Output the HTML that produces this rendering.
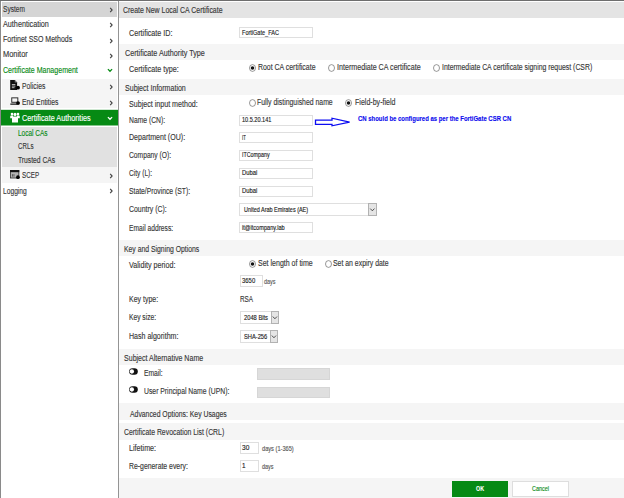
<!DOCTYPE html>
<html lang="en"><head><meta charset="utf-8"><title>Create New Local CA Certificate</title>
<style>
html,body{margin:0;padding:0;background:#fff}
body{width:624px;height:498px;overflow:hidden;position:relative;font-family:'Liberation Sans',sans-serif;}
#app{position:absolute;left:0;top:0;width:624px;height:498px;overflow:hidden;background:#fff}
#app:before{content:"";position:absolute;left:0;top:0;width:624px;height:1px;background:#6e6e6e;z-index:5}
#app:after{content:"";position:absolute;left:0;top:1px;width:1px;height:497px;background:#8a8a8a;z-index:5}
nav{position:absolute;left:0;top:0;width:118px;height:498px}
nav:after{content:"";position:absolute;left:118px;top:0;width:1px;height:498px;background:#949494}
nav ul{list-style:none;margin:0;padding:0}
nav li{position:absolute;margin:0;padding:0}
main{position:absolute;left:119px;top:0;width:505px;height:498px}
.t{position:absolute;white-space:nowrap;line-height:12px;height:12px;margin:0;padding:0;font-weight:400;transform-origin:0 50%;font-family:'Liberation Sans',sans-serif;display:block;-webkit-text-stroke:0.13px currentColor}
.a{position:absolute;display:block}
.bar{position:absolute;left:0;right:0}
.inp{position:absolute;box-sizing:border-box;border:1px solid #dfdfdf;background:#fff}
.inp.dis{background:#dfdfdf;border-color:#d6d6d6}
.sel{position:absolute;box-sizing:border-box;border:1px solid #dfdfdf;background:#fff}
.sel .btn{position:absolute;top:-1px;bottom:-1px;box-sizing:border-box;border:1px solid #b2b2b2;background:#e5e5e5;overflow:hidden}
.sel .btn svg{position:absolute;left:-1px;top:-1px}
.foot{position:absolute;left:0;right:0;background:#f5f5f5}
button{position:absolute;box-sizing:border-box;margin:0;padding:0;border:0;font-family:'Liberation Sans',sans-serif;border-radius:0}
button.ok{background:#068a14}
button.cancel{background:#fff;border:1px solid #dedede}
</style></head>
<body><div id="app">
<nav><ul><li style="top:2.0px;height:14.70px;left:2px;width:115px;background:#d5d5d5;"><span class="t" style="left:1.05px;top:1.20px;font-size:8.5px;color:#363636;transform:scaleX(0.7727);">System</span><svg class="a" style="left:106.5px;top:4.70px" width="5" height="6" viewBox="0 0 5 6"><path d="M1.2 0.9 L3.1 3 L1.2 5.1" fill="none" stroke="#444" stroke-width="1.15"/></svg></li>
<li style="top:16.5px;height:15.50px;left:2px;width:115px;"><span class="t" style="left:1.05px;top:1.20px;font-size:8.5px;color:#363636;transform:scaleX(0.8520);">Authentication</span><svg class="a" style="left:106.5px;top:5.30px" width="5" height="6" viewBox="0 0 5 6"><path d="M1.2 0.9 L3.1 3 L1.2 5.1" fill="none" stroke="#444" stroke-width="1.15"/></svg></li>
<li style="top:32.0px;height:15.50px;left:2px;width:115px;"><span class="t" style="left:1.05px;top:1.30px;font-size:8.5px;color:#363636;transform:scaleX(0.8229);">Fortinet SSO Methods</span><svg class="a" style="left:106.5px;top:5.60px" width="5" height="6" viewBox="0 0 5 6"><path d="M1.2 0.9 L3.1 3 L1.2 5.1" fill="none" stroke="#444" stroke-width="1.15"/></svg></li>
<li style="top:47.5px;height:15.50px;left:2px;width:115px;"><span class="t" style="left:1.05px;top:0.80px;font-size:8.5px;color:#363636;transform:scaleX(0.8750);">Monitor</span><svg class="a" style="left:106.5px;top:5.40px" width="5" height="6" viewBox="0 0 5 6"><path d="M1.2 0.9 L3.1 3 L1.2 5.1" fill="none" stroke="#444" stroke-width="1.15"/></svg></li>
<li style="top:63.0px;height:15.50px;left:2px;width:115px;"><span class="t" style="left:1.05px;top:0.90px;font-size:8.5px;color:#068a14;transform:scaleX(0.8288);">Certificate Management</span><svg class="a" style="left:105.3px;top:5.40px" width="6" height="5" viewBox="0 0 6 5"><path d="M0.9 1.1 L3 3.3 L5.1 1.1" fill="none" stroke="#068a14" stroke-width="1.25"/></svg></li>
<li style="top:78.5px;height:15.50px;left:2px;width:115px;background:#f5f5f5;"><svg class="a" style="left:8.1px;top:1.80px" width="10.3" height="10.5" preserveAspectRatio="none" viewBox="0 0 10 10"><path d="M0.2 0 H4.6 L6.9 2.3 V9.6 H0.2 Z" fill="#111"/><path d="M4.6 0 V2.3 H6.9 Z" fill="#777"/><path d="M1.8 4.3H5.2M1.8 5.8H5.2M1.8 7.3H4.4" stroke="#c8c8c8" stroke-width="0.85"/><circle cx="7.8" cy="7.3" r="1.85" fill="#000"/></svg><span class="t" style="left:19.85px;top:1.20px;font-size:8.5px;color:#363636;transform:scaleX(0.7953);">Policies</span><svg class="a" style="left:106.5px;top:5.10px" width="5" height="6" viewBox="0 0 5 6"><path d="M1.2 0.9 L3.1 3 L1.2 5.1" fill="none" stroke="#444" stroke-width="1.15"/></svg></li>
<li style="top:94.0px;height:14.00px;left:2px;width:115px;background:#f5f5f5;"><svg class="a" style="left:8.1px;top:1.90px" width="10.3" height="10.3" preserveAspectRatio="none" viewBox="0 0 10 10"><rect x="1.7" y="1.8" width="5.9" height="4.3" fill="none" stroke="#2a2a2a" stroke-width="0.95"/><path d="M0.3 7.9H7" stroke="#222" stroke-width="1.3"/><circle cx="7.8" cy="6.9" r="1.85" fill="#000"/></svg><span class="t" style="left:20.15px;top:2.00px;font-size:8.5px;color:#363636;transform:scaleX(0.8044);">End Entities</span><svg class="a" style="left:106.5px;top:5.70px" width="5" height="6" viewBox="0 0 5 6"><path d="M1.2 0.9 L3.1 3 L1.2 5.1" fill="none" stroke="#444" stroke-width="1.15"/></svg></li>
<li style="top:109.0px;height:17.00px;left:1px;width:117px;background:linear-gradient(to bottom,#cfe8d2 0,#cfe8d2 1px,#068a14 1px,#068a14 16px,#84c58b 16px,#84c58b 17px);"><svg class="a" style="left:9.1px;top:3.00px" width="10" height="10.6" preserveAspectRatio="none" viewBox="0 0 10 10"><g fill="#fff"><circle cx="2" cy="1.9" r="1.3"/><circle cx="8" cy="1.9" r="1.3"/><circle cx="5" cy="2.3" r="1.5"/><path d="M0.2 6V4.4Q0.2 3.4 1.2 3.4H3V6Z"/><path d="M9.8 6V4.4Q9.8 3.4 8.8 3.4H7V6Z"/><path d="M2 9.8V5.6Q2 4.2 3.4 4.2H6.6Q8 4.2 8 5.6V9.8Z"/></g></svg><span class="t" style="left:20.65px;top:3.20px;font-size:8.5px;color:#fff;transform:scaleX(0.8552);">Certificate Authorities</span><svg class="a" style="left:106.3px;top:6.70px" width="6" height="5" viewBox="0 0 6 5"><path d="M0.9 1.1 L3 3.3 L5.1 1.1" fill="none" stroke="#fff" stroke-width="1.25"/></svg></li>
<li style="top:127.0px;height:12.80px;left:2px;width:115px;background:#e1e1e1;"><span class="t" style="left:16.15px;top:-0.50px;font-size:8.5px;color:#068a14;transform:scaleX(0.7613);">Local CAs</span></li>
<li style="top:139.8px;height:13.60px;left:2px;width:115px;background:#e1e1e1;"><span class="t" style="left:16.15px;top:0.10px;font-size:8.5px;color:#363636;transform:scaleX(0.7289);">CRLs</span></li>
<li style="top:153.4px;height:13.60px;left:2px;width:115px;background:#e1e1e1;"><span class="t" style="left:16.15px;top:0.30px;font-size:8.5px;color:#363636;transform:scaleX(0.7928);">Trusted CAs</span></li>
<li style="top:167.0px;height:15.70px;left:2px;width:115px;background:#f5f5f5;"><svg class="a" style="left:8.1px;top:2.70px" width="10.2" height="10.4" preserveAspectRatio="none" viewBox="0 0 10 10"><rect x="0.5" y="0.5" width="8.2" height="7.2" fill="#b4b4b4" stroke="#2a2a2a" stroke-width="0.8"/><rect x="0.1" y="0.1" width="9" height="2" fill="#111"/><path d="M2.4 4V6.4M3.9 4V6.4" stroke="#444" stroke-width="0.8"/><circle cx="7.8" cy="6.9" r="1.8" fill="#000"/></svg><span class="t" style="left:19.85px;top:2.10px;font-size:8.5px;color:#363636;transform:scaleX(0.7385);">SCEP</span><svg class="a" style="left:106.5px;top:6.00px" width="5" height="6" viewBox="0 0 5 6"><path d="M1.2 0.9 L3.1 3 L1.2 5.1" fill="none" stroke="#444" stroke-width="1.15"/></svg></li>
<li style="top:182.7px;height:15.30px;left:2px;width:115px;"><span class="t" style="left:1.05px;top:2.00px;font-size:8.5px;color:#363636;transform:scaleX(0.7864);">Logging</span><svg class="a" style="left:106.5px;top:5.70px" width="5" height="6" viewBox="0 0 5 6"><path d="M1.2 0.9 L3.1 3 L1.2 5.1" fill="none" stroke="#444" stroke-width="1.15"/></svg></li></ul></nav>
<main><div class="bar" style="top:2px;height:16.10px;background:#e4e4e4"><h1 class="t" style="left:4.15px;top:1.90px;font-size:8.5px;color:#363636;transform:scaleX(0.8163);">Create New Local CA Certificate</h1></div>
<label class="t" style="left:9.85px;top:26.70px;font-size:8.3px;color:#363636;transform:scaleX(0.8654);">Certificate ID:</label>
<div class="inp" style="left:120.30px;top:27.10px;width:73.40px;height:11.30px"><span class="t" style="left:1.65px;top:-1.55px;font-size:6.5px;color:#1a1a1a;transform:scaleX(0.8510);">FortiGate_FAC</span></div>
<div class="bar" style="top:44.3px;height:15.80px;background:#f5f5f5"><h2 class="t" style="left:5.65px;top:3.00px;font-size:8.3px;color:#363636;transform:scaleX(0.8665);">Certificate Authority Type</h2></div>
<label class="t" style="left:9.85px;top:62.90px;font-size:8.3px;color:#363636;transform:scaleX(0.8637);">Certificate type:</label>
<svg class="a" style="left:130.00px;top:63.90px" width="7" height="8" viewBox="0 0 7 8"><ellipse cx="3.5" cy="4" rx="3.0" ry="3.4" fill="#fff" stroke="#606060" stroke-width="0.65"/><circle cx="3.5" cy="4" r="1.75" fill="#111"/></svg><span class="t" style="left:139.05px;top:61.30px;font-size:8.3px;color:#363636;transform:scaleX(0.8367);">Root CA certificate</span><svg class="a" style="left:209.30px;top:63.90px" width="7" height="8" viewBox="0 0 7 8"><ellipse cx="3.5" cy="4" rx="3.0" ry="3.4" fill="#fff" stroke="#606060" stroke-width="0.65"/></svg><span class="t" style="left:218.05px;top:61.30px;font-size:8.3px;color:#363636;transform:scaleX(0.8591);">Intermediate CA certificate</span><svg class="a" style="left:314.20px;top:63.90px" width="7" height="8" viewBox="0 0 7 8"><ellipse cx="3.5" cy="4" rx="3.0" ry="3.4" fill="#fff" stroke="#606060" stroke-width="0.65"/></svg><span class="t" style="left:322.55px;top:61.30px;font-size:8.3px;color:#363636;transform:scaleX(0.8288);">Intermediate CA certificate signing request (CSR)</span><div class="bar" style="top:78.85px;height:16.25px;background:#f5f5f5"><h2 class="t" style="left:5.65px;top:2.85px;font-size:8.3px;color:#363636;transform:scaleX(0.8505);">Subject Information</h2></div>
<label class="t" style="left:9.85px;top:97.90px;font-size:8.3px;color:#363636;transform:scaleX(0.8572);">Subject input method:</label>
<svg class="a" style="left:130.00px;top:99.10px" width="7" height="8" viewBox="0 0 7 8"><ellipse cx="3.5" cy="4" rx="3.0" ry="3.4" fill="#fff" stroke="#606060" stroke-width="0.65"/></svg><span class="t" style="left:138.45px;top:96.20px;font-size:8.3px;color:#363636;transform:scaleX(0.8289);">Fully distinguished name</span><svg class="a" style="left:226.40px;top:99.10px" width="7" height="8" viewBox="0 0 7 8"><ellipse cx="3.5" cy="4" rx="3.0" ry="3.4" fill="#fff" stroke="#606060" stroke-width="0.65"/><circle cx="3.5" cy="4" r="1.75" fill="#111"/></svg><span class="t" style="left:235.65px;top:96.20px;font-size:8.3px;color:#363636;transform:scaleX(0.8526);">Field-by-field</span><label class="t" style="left:9.85px;top:113.60px;font-size:8.3px;color:#363636;transform:scaleX(0.8155);">Name (CN):</label>
<div class="inp" style="left:120.30px;top:114.60px;width:73.40px;height:11.30px"><span class="t" style="left:1.65px;top:-1.55px;font-size:6.5px;color:#1a1a1a;transform:scaleX(0.8531);">10.5.20.141</span></div>
<label class="t" style="left:9.85px;top:131.30px;font-size:8.3px;color:#363636;transform:scaleX(0.8508);">Department (OU):</label>
<div class="inp" style="left:120.30px;top:132.10px;width:73.40px;height:11.30px"><span class="t" style="left:1.65px;top:-1.55px;font-size:6.5px;color:#1a1a1a;transform:scaleX(0.6573);">IT</span></div>
<label class="t" style="left:9.85px;top:148.90px;font-size:8.3px;color:#363636;transform:scaleX(0.8079);">Company (O):</label>
<div class="inp" style="left:120.30px;top:149.70px;width:73.40px;height:11.30px"><span class="t" style="left:1.65px;top:-1.55px;font-size:6.5px;color:#1a1a1a;transform:scaleX(0.8212);">ITCompany</span></div>
<label class="t" style="left:9.85px;top:166.90px;font-size:8.3px;color:#363636;transform:scaleX(0.7953);">City (L):</label>
<div class="inp" style="left:120.30px;top:167.70px;width:73.40px;height:11.30px"><span class="t" style="left:1.65px;top:-1.55px;font-size:6.5px;color:#1a1a1a;transform:scaleX(0.9008);">Dubai</span></div>
<label class="t" style="left:9.85px;top:184.90px;font-size:8.3px;color:#363636;transform:scaleX(0.8179);">State/Province (ST):</label>
<div class="inp" style="left:120.30px;top:185.90px;width:73.40px;height:11.30px"><span class="t" style="left:1.65px;top:-1.55px;font-size:6.5px;color:#1a1a1a;transform:scaleX(0.9008);">Dubai</span></div>
<label class="t" style="left:9.85px;top:203.20px;font-size:8.3px;color:#363636;transform:scaleX(0.8365);">Country (C):</label>
<div class="sel" style="left:120.40px;top:203.20px;width:137.40px;height:12.60px"><span class="t" style="left:3.45px;top:-0.50px;font-size:6.5px;color:#1a1a1a;transform:scaleX(0.8408);">United Arab Emirates (AE)</span><span class="btn" style="left:127.70px;width:8.70px"><svg width="8.70" height="12.60"><path d="M2.25 5.60 L4.35 7.80 L6.45 5.60" fill="none" stroke="#3c3c3c" stroke-width="0.9"/></svg></span></div>
<label class="t" style="left:9.85px;top:221.60px;font-size:8.3px;color:#363636;transform:scaleX(0.8036);">Email address:</label>
<div class="inp" style="left:120.30px;top:222.10px;width:73.40px;height:11.30px"><span class="t" style="left:1.55px;top:-1.55px;font-size:6.5px;color:#1a1a1a;transform:scaleX(0.8629);">it@itcompany.lab</span></div>
<div class="bar" style="top:239.9px;height:16.00px;background:#f5f5f5"><h2 class="t" style="left:5.25px;top:3.10px;font-size:8.3px;color:#363636;transform:scaleX(0.8234);">Key and Signing Options</h2></div>
<label class="t" style="left:9.85px;top:259.10px;font-size:8.3px;color:#363636;transform:scaleX(0.8623);">Validity period:</label>
<svg class="a" style="left:130.00px;top:259.50px" width="7" height="8" viewBox="0 0 7 8"><ellipse cx="3.5" cy="4" rx="3.0" ry="3.4" fill="#fff" stroke="#606060" stroke-width="0.65"/><circle cx="3.5" cy="4" r="1.75" fill="#111"/></svg><span class="t" style="left:138.85px;top:256.50px;font-size:8.3px;color:#363636;transform:scaleX(0.8470);">Set length of time</span><svg class="a" style="left:205.80px;top:259.50px" width="7" height="8" viewBox="0 0 7 8"><ellipse cx="3.5" cy="4" rx="3.0" ry="3.4" fill="#fff" stroke="#606060" stroke-width="0.65"/></svg><span class="t" style="left:214.15px;top:256.50px;font-size:8.3px;color:#363636;transform:scaleX(0.8312);">Set an expiry date</span><div class="inp" style="left:120.60px;top:275.30px;width:23.20px;height:11.30px"><span class="t" style="left:1.05px;top:-1.55px;font-size:6.8px;color:#1a1a1a;transform:scaleX(0.8727);">3650</span></div>
<span class="t" style="left:145.45px;top:275.60px;font-size:7px;color:#555;transform:scaleX(0.7772);">days</span><label class="t" style="left:9.85px;top:292.90px;font-size:8.3px;color:#363636;transform:scaleX(0.8412);">Key type:</label>
<span class="t" style="left:120.55px;top:293.30px;font-size:8.3px;color:#363636;transform:scaleX(0.7678);">RSA</span><label class="t" style="left:9.85px;top:310.60px;font-size:8.3px;color:#363636;transform:scaleX(0.8048);">Key size:</label>
<div class="sel" style="left:121.00px;top:311.10px;width:38.80px;height:12.50px"><span class="t" style="left:2.75px;top:-0.55px;font-size:6.5px;color:#1a1a1a;transform:scaleX(0.8853);">2048 Bits</span><span class="btn" style="left:30.00px;width:7.80px"><svg width="7.80" height="12.50"><path d="M1.80 5.55 L3.90 7.75 L6.00 5.55" fill="none" stroke="#3c3c3c" stroke-width="0.9"/></svg></span></div>
<label class="t" style="left:9.85px;top:329.60px;font-size:8.3px;color:#363636;transform:scaleX(0.8501);">Hash algorithm:</label>
<div class="sel" style="left:121.00px;top:330.30px;width:38.20px;height:12.50px"><span class="t" style="left:2.75px;top:-0.55px;font-size:6.5px;color:#1a1a1a;transform:scaleX(0.8796);">SHA-256</span><span class="btn" style="left:29.30px;width:7.90px"><svg width="7.90" height="12.50"><path d="M1.85 5.55 L3.95 7.75 L6.05 5.55" fill="none" stroke="#3c3c3c" stroke-width="0.9"/></svg></span></div>
<div class="bar" style="top:348.9px;height:16.20px;background:#f5f5f5"><h2 class="t" style="left:5.25px;top:3.20px;font-size:8.3px;color:#363636;transform:scaleX(0.8500);">Subject Alternative Name</h2></div>
<svg class="a" style="left:9.80px;top:368.10px" width="9" height="7" viewBox="0 0 9 7"><rect x="0.2" y="0.2" width="8.6" height="6.6" rx="3.3" fill="#111"/><circle cx="2.9" cy="3.5" r="2.15" fill="#fff"/></svg><label class="t" style="left:25.15px;top:367.40px;font-size:8.3px;color:#363636;transform:scaleX(0.8108);">Email:</label>
<div class="inp dis" style="left:138.00px;top:368.40px;width:73.00px;height:11.30px"></div>
<svg class="a" style="left:9.80px;top:386.10px" width="9" height="7" viewBox="0 0 9 7"><rect x="0.2" y="0.2" width="8.6" height="6.6" rx="3.3" fill="#111"/><circle cx="2.9" cy="3.5" r="2.15" fill="#fff"/></svg><label class="t" style="left:25.15px;top:385.40px;font-size:8.3px;color:#363636;transform:scaleX(0.8223);">User Principal Name (UPN):</label>
<div class="inp dis" style="left:138.00px;top:386.60px;width:73.00px;height:11.30px"></div>
<div class="bar" style="top:403.2px;height:17.20px;background:#f5f5f5"><h2 class="t" style="left:11.15px;top:4.50px;font-size:8.3px;color:#363636;transform:scaleX(0.8254);">Advanced Options: Key Usages</h2></div>
<div class="bar" style="top:422.9px;height:16.80px;background:#f5f5f5"><h2 class="t" style="left:5.25px;top:2.90px;font-size:8.3px;color:#363636;transform:scaleX(0.8294);">Certificate Revocation List (CRL)</h2></div>
<label class="t" style="left:9.85px;top:441.90px;font-size:8.3px;color:#363636;transform:scaleX(0.8642);">Lifetime:</label>
<div class="inp" style="left:120.90px;top:442.40px;width:19.30px;height:11.70px"><span class="t" style="left:1.55px;top:-1.35px;font-size:6.5px;color:#1a1a1a;transform:scaleX(1.0091);">30</span></div>
<span class="t" style="left:142.55px;top:442.70px;font-size:6.8px;color:#555;transform:scaleX(0.8308);">days (1-365)</span><label class="t" style="left:9.85px;top:459.80px;font-size:8.3px;color:#363636;transform:scaleX(0.8278);">Re-generate every:</label>
<div class="inp" style="left:120.90px;top:460.40px;width:19.30px;height:11.30px"><span class="t" style="left:1.55px;top:-1.55px;font-size:6.5px;color:#1a1a1a;transform:scaleX(0.9655);">1</span></div>
<span class="t" style="left:142.55px;top:460.80px;font-size:6.8px;color:#555;transform:scaleX(0.7939);">days</span><svg class="a" style="left:195px;top:116px" width="38" height="12" viewBox="0 0 38 12"><path d="M1.5 4.1 H18 V2.2 L35.6 6.1 L18 9.8 V8.3 H1.5 Z" fill="#fff" stroke="#0c0cf2" stroke-width="1.3" stroke-linejoin="miter"/></svg><span class="t note" style="left:238.75px;top:112.90px;font-size:7.3px;color:#0c0cee;transform:scaleX(0.8161);font-weight:700;">CN should be configured as per the FortiGate CSR CN</span><div class="foot" style="top:477.7px;height:20.3px"><button class="ok" style="left:332.70px;top:3.1px;width:56.3px;height:15.9px"><span class="t" style="left:24.65px;top:1.90px;font-size:7.5px;color:#fff;transform:scaleX(0.7111);font-weight:700;">OK</span></button><button class="cancel" style="left:392.80px;top:3.1px;width:56.8px;height:15.9px"><span class="t" style="left:18.95px;top:1.60px;font-size:7.5px;color:#068a14;transform:scaleX(0.7320);">Cancel</span></button></div>
</main>
</div>
</body></html>
